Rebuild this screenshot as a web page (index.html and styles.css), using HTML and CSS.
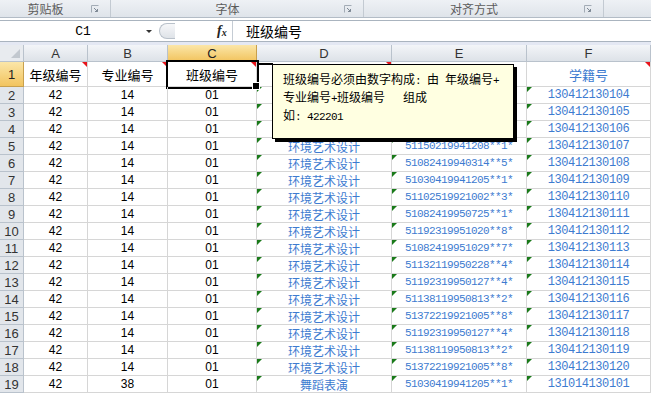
FILE: index.html
```html
<!DOCTYPE html>
<html lang="zh-CN">
<head>
  <meta charset="UTF-8" />
  <title>班级编号</title>
  <link rel="stylesheet" href="styles.css">
</head>
<body>
  <!-- Ribbon group labels -->
  <div class="ribbon">
    <div class="group g-clip"><span class="group-label">剪贴板</span><span class="launcher"><svg width="8" height="8" viewBox="0 0 8 8"><path d="M0.5 7.5V0.5H7.5" fill="none" stroke="#a3acb6"/><path d="M3 3L6.5 6.5M4 6.5H6.5V4" fill="none" stroke="#7d8894"/></svg></span></div>
    <div class="group g-font"><span class="group-label">字体</span><span class="launcher"><svg width="8" height="8" viewBox="0 0 8 8"><path d="M0.5 7.5V0.5H7.5" fill="none" stroke="#a3acb6"/><path d="M3 3L6.5 6.5M4 6.5H6.5V4" fill="none" stroke="#7d8894"/></svg></span></div>
    <div class="group g-align"><span class="group-label">对齐方式</span><span class="launcher"><svg width="8" height="8" viewBox="0 0 8 8"><path d="M0.5 7.5V0.5H7.5" fill="none" stroke="#a3acb6"/><path d="M3 3L6.5 6.5M4 6.5H6.5V4" fill="none" stroke="#7d8894"/></svg></span></div>
    <div class="group g-rest"></div>
  </div>

  <!-- Formula bar -->
  <div class="formula-bar">
    <div class="name-box">
      <span class="name-text">C1</span>
      <span class="name-arrow"></span>
    </div>
    <div class="splitter"></div>
    <div class="fx"><i>f</i><small>x</small></div>
    <div class="formula-text">班级编号</div>
  </div>
  <div class="band"></div>

  <!-- Worksheet (D1:E4 sit under the comment popup) -->
  <div class="sheet">
    <div class="hd corner"></div>
    <div class="hd">A</div>
    <div class="hd">B</div>
    <div class="hd hl">C</div>
    <div class="hd">D</div>
    <div class="hd">E</div>
    <div class="hd">F</div>

    <div class="rh hl">1</div>
    <div class="c title n">年级编号</div>
    <div class="c title n">专业编号</div>
    <div class="c title n active">班级编号</div>
    <div class="c title n"></div>
    <div class="c title"></div>
    <div class="c title blue n">学籍号</div>

    <div class="rh">2</div><div class="c">42</div><div class="c">14</div><div class="c">01</div><div class="c cn blue g"></div><div class="c id g"></div><div class="c sn g">130412130104</div>
    <div class="rh">3</div><div class="c">42</div><div class="c">14</div><div class="c">01</div><div class="c cn blue g"></div><div class="c id g"></div><div class="c sn g">130412130105</div>
    <div class="rh">4</div><div class="c">42</div><div class="c">14</div><div class="c">01</div><div class="c cn blue g"></div><div class="c id g"></div><div class="c sn g">130412130106</div>
    <div class="rh">5</div><div class="c">42</div><div class="c">14</div><div class="c">01</div><div class="c cn blue g">环境艺术设计</div><div class="c id g">51150219941208**1*</div><div class="c sn g">130412130107</div>
    <div class="rh">6</div><div class="c">42</div><div class="c">14</div><div class="c">01</div><div class="c cn blue g">环境艺术设计</div><div class="c id g">51082419940314**5*</div><div class="c sn g">130412130108</div>
    <div class="rh">7</div><div class="c">42</div><div class="c">14</div><div class="c">01</div><div class="c cn blue g">环境艺术设计</div><div class="c id g">51030419941205**1*</div><div class="c sn g">130412130109</div>
    <div class="rh">8</div><div class="c">42</div><div class="c">14</div><div class="c">01</div><div class="c cn blue g">环境艺术设计</div><div class="c id g">51102519921002**3*</div><div class="c sn g">130412130110</div>
    <div class="rh">9</div><div class="c">42</div><div class="c">14</div><div class="c">01</div><div class="c cn blue g">环境艺术设计</div><div class="c id g">51082419950725**1*</div><div class="c sn g">130412130111</div>
    <div class="rh">10</div><div class="c">42</div><div class="c">14</div><div class="c">01</div><div class="c cn blue g">环境艺术设计</div><div class="c id g">51192319951020**8*</div><div class="c sn g">130412130112</div>
    <div class="rh">11</div><div class="c">42</div><div class="c">14</div><div class="c">01</div><div class="c cn blue g">环境艺术设计</div><div class="c id g">51082419951029**7*</div><div class="c sn g">130412130113</div>
    <div class="rh">12</div><div class="c">42</div><div class="c">14</div><div class="c">01</div><div class="c cn blue g">环境艺术设计</div><div class="c id g">51132119950228**4*</div><div class="c sn g">130412130114</div>
    <div class="rh">13</div><div class="c">42</div><div class="c">14</div><div class="c">01</div><div class="c cn blue g">环境艺术设计</div><div class="c id g">51192319950127**4*</div><div class="c sn g">130412130115</div>
    <div class="rh">14</div><div class="c">42</div><div class="c">14</div><div class="c">01</div><div class="c cn blue g">环境艺术设计</div><div class="c id g">51138119950813**2*</div><div class="c sn g">130412130116</div>
    <div class="rh">15</div><div class="c">42</div><div class="c">14</div><div class="c">01</div><div class="c cn blue g">环境艺术设计</div><div class="c id g">51372219921005**8*</div><div class="c sn g">130412130117</div>
    <div class="rh">16</div><div class="c">42</div><div class="c">14</div><div class="c">01</div><div class="c cn blue g">环境艺术设计</div><div class="c id g">51192319950127**4*</div><div class="c sn g">130412130118</div>
    <div class="rh">17</div><div class="c">42</div><div class="c">14</div><div class="c">01</div><div class="c cn blue g">环境艺术设计</div><div class="c id g">51138119950813**2*</div><div class="c sn g">130412130119</div>
    <div class="rh">18</div><div class="c">42</div><div class="c">14</div><div class="c">01</div><div class="c cn blue g">环境艺术设计</div><div class="c id g">51372219921005**8*</div><div class="c sn g">130412130120</div>
    <div class="rh">19</div><div class="c">42</div><div class="c">38</div><div class="c">01</div><div class="c cn blue g">舞蹈表演</div><div class="c id g">51030419941205**1*</div><div class="c sn g">131014130101</div>
  </div>

  <!-- Comment popup on C1 -->
  <div class="comment-line"></div>
  <div class="comment">
    <p>班级编号必须由数字构成<span class="half">: </span>由<span class="half"> </span>年级编号<span class="half">+</span></p>
    <p>专业编号<span class="half">+</span>班级编号<span class="half">   </span>组成</p>
    <p>如<span class="half">: 422201</span></p>
  </div>
</body>
</html>
```

FILE: styles.css
```css
/* Reset & Base */
* {
  margin: 0;
  padding: 0;
  box-sizing: border-box;
}

body {
  width: 651px;
  height: 393px;
  overflow: hidden;
  position: relative;
  background: #fff;
  font-family: "Liberation Sans", "Noto Sans CJK SC", sans-serif;
  font-size: 12px;
  color: #000;
}

/* Ribbon group labels */
.ribbon {
  display: flex;
  height: 18px;
  background: linear-gradient(#eef1f5, #dfe4ea);
  border-bottom: 1px solid #b3bcc6;
}

.group {
  display: flex;
  align-items: center;
  border-right: 1px solid #c3cad2;
}

.g-clip { width: 111px; }
.g-font { width: 253px; }
.g-align { width: 240px; }
.g-rest { flex: 1; border-right: none; }

.group-label {
  flex: 1;
  text-align: center;
  color: #5b5b5b;
  font-family: "Noto Sans CJK SC", sans-serif;
  font-size: 12px;
  line-height: 17px;
}

.launcher {
  display: flex;
  width: 8px;
  height: 8px;
  margin-right: 11px;
}

/* Formula bar */
.formula-bar {
  display: flex;
  align-items: center;
  height: 22px;
  margin-top: 2px;
  background: #fff;
  border-top: 1px solid #aab4bf;
  border-bottom: 1px solid #aab4bf;
}

.name-box {
  display: flex;
  align-items: center;
  width: 156px;
  height: 100%;
  padding-right: 4px;
}

.name-text {
  flex: 1;
  text-align: center;
  font-family: "Liberation Mono", monospace;
  font-size: 13px;
  padding-left: 20px;
}

.name-arrow {
  width: 0;
  height: 0;
  border-left: 3px solid transparent;
  border-right: 3px solid transparent;
  border-top: 3px solid #333;
}

.splitter {
  width: 16px;
  height: 16px;
  margin-left: 3px;
  border: 1px solid #b9c1ca;
  border-right: none;
  border-radius: 8px 0 0 8px;
  background: linear-gradient(#f6f7f9, #dfe3e8);
}

.fx {
  width: 58px;
  padding-left: 42px;
  height: 100%;
  display: flex;
  align-items: center;
  border-right: 1px solid #c5ccd4;
  font-family: "Liberation Serif", serif;
  font-weight: bold;
  font-size: 14px;
  color: #222;
}

.fx small {
  font-size: 10px;
  font-style: italic;
  margin-top: 3px;
}

.formula-text {
  padding-left: 13px;
  font-family: "Noto Sans CJK SC", sans-serif;
  font-size: 14px;
}

.band {
  height: 3px;
  background: #e4e8f3;
}

/* Worksheet */
.sheet {
  display: grid;
  grid-template-columns: 24px 64px 80px 89px 135px 135px 124px;
  grid-template-rows: 17px 25px repeat(18, 17px);
}

.hd,
.rh {
  display: flex;
  align-items: center;
  justify-content: center;
  background: linear-gradient(#f3f5f8, #dde2e8);
  border-right: 1px solid #b9c2cc;
  border-bottom: 1px solid #b9c2cc;
  color: #333;
  font-size: 13px;
}

.rh {
  background: #e2e6eb;
}

.hd.hl,
.rh.hl {
  background: linear-gradient(#fbe6a8, #f2c45f);
  border-color: #c8a04d;
  color: #222;
}

.corner {
  position: relative;
  background: #e8ebef;
}

.corner::after {
  content: "";
  position: absolute;
  right: 3px;
  bottom: 3px;
  border-bottom: 9px solid #c2c8cf;
  border-left: 9px solid transparent;
}

.c {
  position: relative;
  display: flex;
  align-items: center;
  justify-content: center;
  border-right: 1px solid #d6d6d6;
  border-bottom: 1px solid #d6d6d6;
  font-size: 12px;
  white-space: nowrap;
}

.c.title {
  font-family: "Noto Sans CJK SC", sans-serif;
  font-size: 13px;
}

.blue {
  color: #3d7bd0;
}

.cn {
  font-family: "Noto Sans CJK SC", sans-serif;
}

.id {
  color: #3d7bd0;
  font-family: "Liberation Mono", monospace;
  font-size: 11px;
  letter-spacing: -0.6px;
}

.sn {
  color: #3d7bd0;
  font-family: "Liberation Mono", monospace;
  font-size: 12px;
  letter-spacing: -0.4px;
}

/* green error flag, top-left */
.g::before {
  content: "";
  position: absolute;
  top: 0;
  left: 0;
  border-top: 5px solid #1a7a1a;
  border-right: 5px solid transparent;
}

/* red comment flag, top-right */
.n::after {
  content: "";
  position: absolute;
  top: 0;
  right: 0;
  border-top: 5px solid #e8141b;
  border-left: 5px solid transparent;
}

.c.active {
  outline: 2px solid #000;
  outline-offset: 0;
}

.c.active::before {
  content: "";
  position: absolute;
  right: -4px;
  bottom: -4px;
  width: 6px;
  height: 6px;
  background: #000;
  border: 1px solid #fff;
  z-index: 2;
}

/* Comment popup */
.comment-line {
  position: absolute;
  left: 257px;
  top: 63px;
  width: 16px;
  height: 2px;
  background: #000;
}

.comment {
  position: absolute;
  left: 272px;
  top: 64px;
  width: 242px;
  height: 75px;
  padding: 6px 0 0 10px;
  background: #ffffe1;
  border: 1px solid #000;
  box-shadow: 3px 3px 0 #000;
  font-family: "Noto Sans CJK SC", sans-serif;
  font-size: 12px;
  line-height: 15px;
  color: #000;
  white-space: nowrap;
}

.comment .half {
  font-family: "Liberation Mono", monospace;
  font-size: 11px;
  letter-spacing: -0.6px;
  white-space: pre;
}
```
